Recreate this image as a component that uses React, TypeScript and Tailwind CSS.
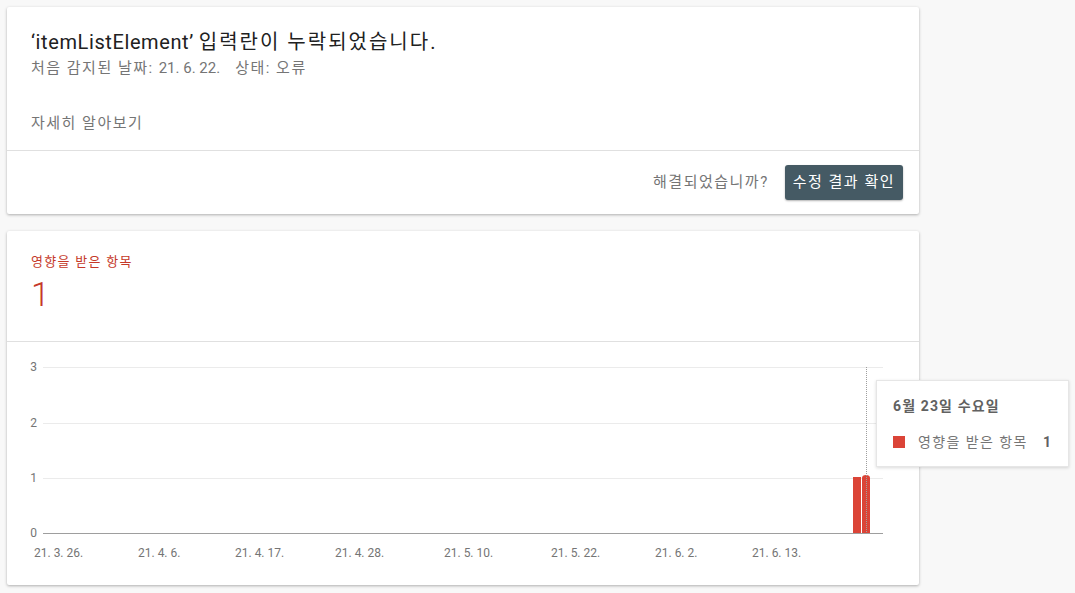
const xLabels = [
  { x: 27, t: '21. 3. 26.' },
  { x: 131, t: '21. 4. 6.' },
  { x: 228, t: '21. 4. 17.' },
  { x: 328, t: '21. 4. 28.' },
  { x: 437, t: '21. 5. 10.' },
  { x: 544, t: '21. 5. 22.' },
  { x: 648, t: '21. 6. 2.' },
  { x: 745, t: '21. 6. 13.' },
]

const grid = [
  { y: 25, v: '3' },
  { y: 81, v: '2' },
  { y: 136, v: '1' },
]

function Chart() {
  return (
    <div className="relative h-[243px]">
      <svg width="912" height="243" className="block">
        {grid.map((g) => (
          <g key={g.v}>
            <line x1="36" x2="876" y1={g.y + 0.5} y2={g.y + 0.5} stroke="#ebebeb" strokeWidth="1" />
            <text x="30" y={g.y + 4} textAnchor="end" fontSize="12" fill="#757575">{g.v}</text>
          </g>
        ))}
        <text x="30" y="195" textAnchor="end" fontSize="12" fill="#757575">0</text>
        <rect x="846" y="135" width="8" height="56" fill="#db4437" />
        <path d="M855 191 V136 Q855 133 859 133 Q863 133 863 136 V191 Z" fill="#db4437" />
        <line x1="859.5" x2="859.5" y1="25" y2="191" stroke="#9e9e9e" strokeWidth="1" strokeDasharray="1 1" />
        <line x1="36" x2="876" y1="191.5" y2="191.5" stroke="#9e9e9e" strokeWidth="1" />
        {xLabels.map((l) => (
          <text key={l.t} x={l.x} y="215" fontSize="12" fill="#757575">{l.t}</text>
        ))}
      </svg>
      <div className="absolute left-[869px] top-[38px] w-[193px] h-[87px] bg-white border border-[#e6e6e6] shadow-[0_1px_3px_rgba(0,0,0,0.15)] px-4 pt-[15px]">
        <div className="text-[14px] font-bold text-[#616161] leading-5 tracking-[0.08em]">6월 23일 수요일</div>
        <div className="flex items-center mt-[16px] text-[14px] text-[#757575] leading-5">
          <span className="w-3 h-3 bg-[#db4437] mr-[13px]" />
          <span className="tracking-[0.1em]">영향을 받은 항목</span>
          <span className="ml-auto mr-[1px] font-bold text-[#616161]">1</span>
        </div>
      </div>
    </div>
  )
}

export default function App() {
  return (
    <div
      className="min-h-[593px] bg-[#f8f8f8] pt-[7px] pl-[7px]"
      style={{ fontFamily: 'Roboto, "Noto Sans CJK KR", sans-serif' }}
    >
      <div className="w-[912px] bg-white rounded-[2px] shadow-[0_1px_3px_rgba(0,0,0,0.3)]">
        <div className="px-6 pt-[21px] pb-[16px] h-[143px]">
          <h1 className="text-[20px] leading-7 text-[#212121]">
            <span className="tracking-[0.6px]">‘itemListElement’</span>{' '}
            <span className="tracking-[0.1em]">입력란이 누락되었습니다.</span>
          </h1>
          <div className="text-[15px] leading-5 text-[#757575] mt-[2px]">
            <span className="tracking-[0.1em]">처음 감지된 날짜:</span>
            <span className="ml-[5px]">21. 6. 22.</span>
            <span className="ml-[15px] tracking-[0.1em]">상태: 오류</span>
          </div>
          <div className="text-[15px] leading-5 text-[#757575] mt-[35px] tracking-[0.1em]">자세히 알아보기</div>
        </div>
        <div className="border-t border-[#e0e0e0] h-[64px] flex items-center justify-end pr-4 gap-4">
          <span className="text-[15px] text-[#757575] tracking-[0.1em]">해결되었습니까?</span>
          <button className="h-[35px] px-2 rounded-[3px] bg-[#455a64] text-white text-[15px] tracking-[0.1em] shadow-[0_1px_2px_rgba(0,0,0,0.3)]">
            수정 결과 확인
          </button>
        </div>
      </div>

      <div className="w-[912px] mt-[17px] bg-white rounded-[2px] shadow-[0_1px_3px_rgba(0,0,0,0.3)]">
        <div className="px-6 pt-[22px] h-[110px]">
          <div className="text-[13px] leading-[18px] text-[#c53929] tracking-[0.1em]">영향을 받은 항목</div>
          <div className="text-[34px] leading-[40px] font-light text-[#c53929] mt-[3px]">1</div>
        </div>
        <div className="border-t border-[#e0e0e0]">
          <Chart />
        </div>
      </div>
    </div>
  )
}
